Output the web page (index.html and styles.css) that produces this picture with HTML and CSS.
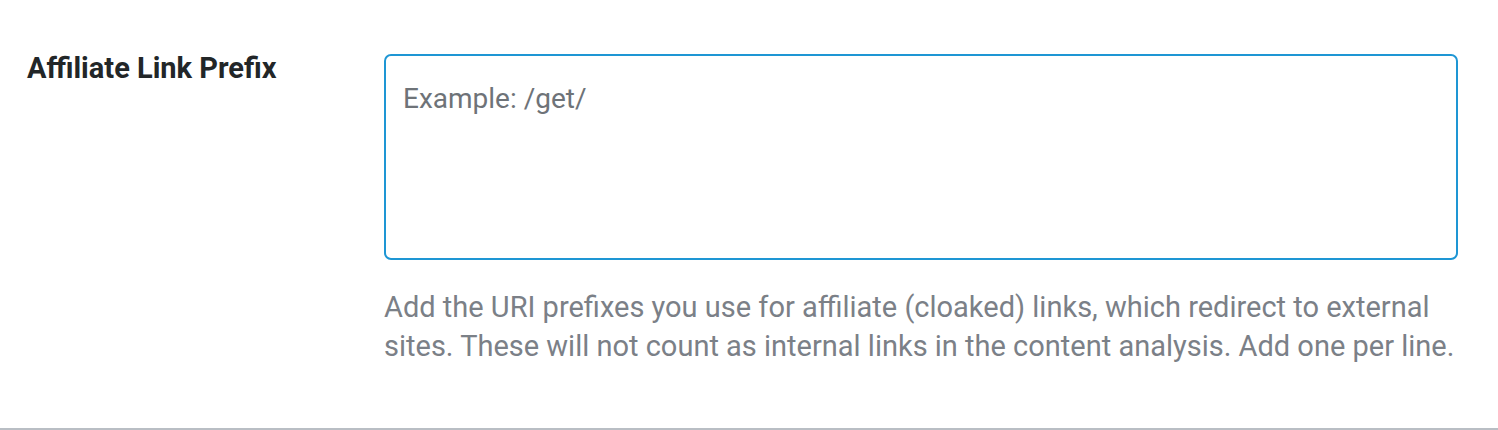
FILE: index.html
```html
<!DOCTYPE html>
<html lang="en">
<head>
<meta charset="utf-8">
<title>Links settings</title>
<link rel="stylesheet" href="styles.css">
</head>
<body>
  <div class="settings-row">
    <label class="field-label" for="affiliate-prefix">Affiliate Link Prefix</label>
    <div class="field-body">
      <textarea id="affiliate-prefix" class="field-input" placeholder="Example: /get/"></textarea>
      <p class="field-desc">Add the URI prefixes you use for affiliate (cloaked) links, which redirect to external sites. These will not count as internal links in the content analysis. Add one per line.</p>
    </div>
  </div>
</body>
</html>
```

FILE: styles.css
```css
html, body {
  margin: 0;
  padding: 0;
  background: #fff;
}

body {
  font-family: Roboto, "Noto Sans", "DejaVu Sans", sans-serif;
  color: #1d2327;
}

.settings-row {
  display: grid;
  grid-template-columns: 384px 1074px;
  padding: 54px 0 38px;
  border-bottom: 2px solid #b9bec4;
  height: 336px;
  box-sizing: content-box;
}

.field-label {
  padding: 2px 0 0 27px;
  font-size: 29px;
  font-weight: 700;
  line-height: 24px;
  color: #222628;
}

.field-body {
  display: flex;
  flex-direction: column;
}

.field-input {
  box-sizing: border-box;
  width: 1074px;
  height: 206px;
  margin: 0;
  padding: 28px 17px;
  border: 2px solid #1e96d4;
  border-radius: 7px;
  font-family: inherit;
  font-size: 28px;
  line-height: 30px;
  color: #1d2327;
  resize: none;
  outline: none;
}

.field-input::placeholder {
  color: #6e7378;
}

.field-desc {
  margin: 28px 0 0;
  font-size: 29px;
  line-height: 39px;
  color: #7b8087;
}
```
